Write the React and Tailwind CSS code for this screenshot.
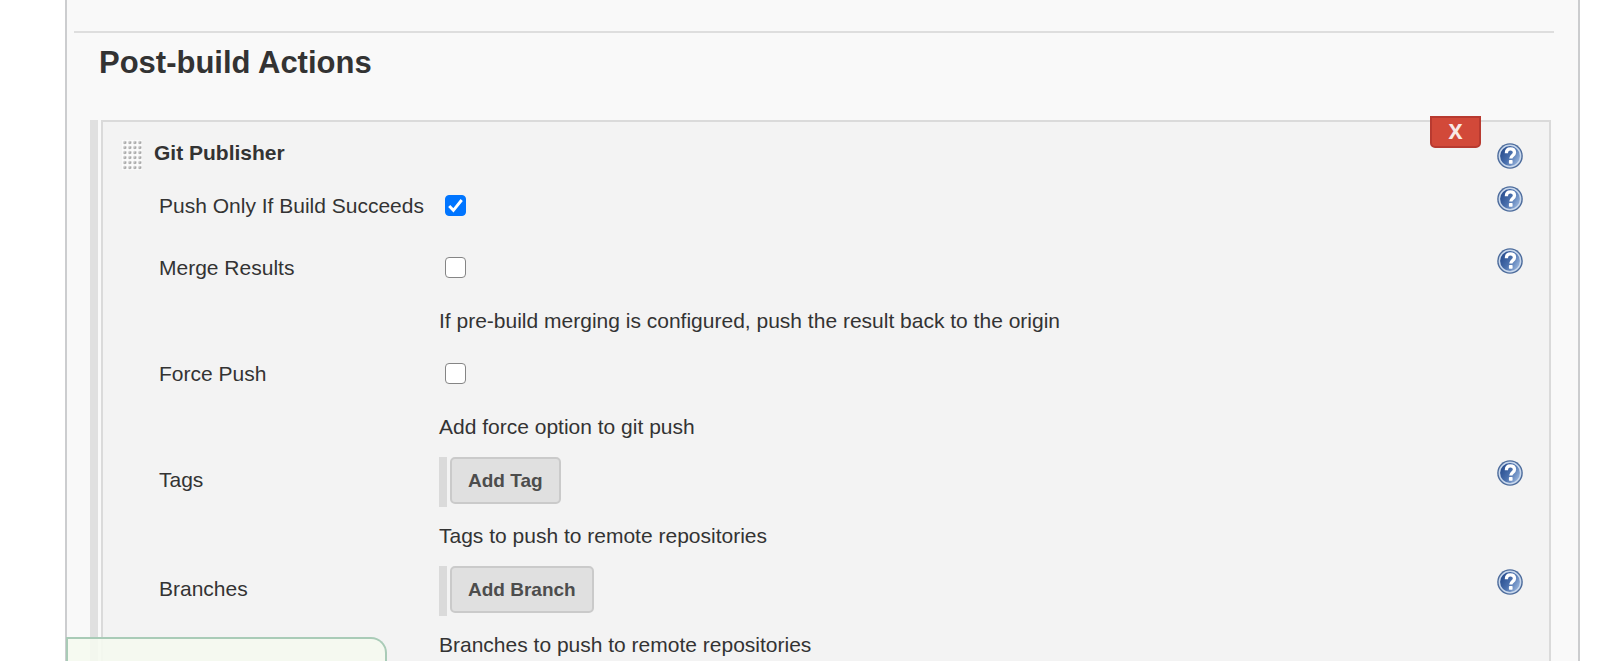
import React from "react";

function HelpIcon() {
  return (
    <svg viewBox="0 0 26 26" className="block size-[26px]" aria-hidden="true">
      <defs>
        <linearGradient id="help-fill" x1="0" y1="0.2" x2="1" y2="0.8">
          <stop offset="0" stopColor="#254a8c" />
          <stop offset="0.5" stopColor="#4a70ad" />
          <stop offset="1" stopColor="#9db9e0" />
        </linearGradient>
      </defs>
      <circle cx="13" cy="13" r="12.8" fill="#4d6c9c" />
      <circle cx="13" cy="13" r="11.4" fill="#c9d8ec" />
      <circle cx="13" cy="13" r="9.9" fill="url(#help-fill)" />
      <path
        d="M9.400 10.200c0-3 1.600-4.300 4-4.300 2.500 0 4.100 1.300 4.100 3.500 0 3-3.700 3.100-3.700 6.200"
        fill="none"
        stroke="#fff"
        strokeWidth="3.3"
      />
      <rect x="11.900" y="17.100" width="3.700" height="3.600" rx="0.700" fill="#fff" />
    </svg>
  );
}

function HelpButton({ topic }) {
  return (
    <button type="button" aria-label={`Help for ${topic}`} className="size-[26px] shrink-0 rounded-full">
      <HelpIcon />
    </button>
  );
}

function Grip() {
  const rows = [0, 1, 2, 3, 4, 5];
  const cols = [0, 1, 2, 3];
  return (
    <svg viewBox="0 0 20 30" className="block h-[30px] w-5 shrink-0" aria-hidden="true">
      <rect width="20" height="30" fill="#fafafa" />
      {rows.map((r) =>
        cols.map((c) => (
          <g key={`${r}-${c}`}>
            <circle cx={c * 5 + 2.8} cy={r * 5 + 2.5} r="1.7" fill="#cfcfcf" />
            <path d={`M${c * 5 + 1.4} ${r * 5 + 3.8}l2.800-2.800v2.800z`} fill="#a8a8a8" />
          </g>
        ))
      )}
    </svg>
  );
}

function Entry({ label, htmlFor, help, description, children }) {
  const Label = htmlFor ? "label" : "span";
  return (
    <div className="grid grid-cols-[280px_1fr_26px]">
      <Label htmlFor={htmlFor} className="pt-2">
        {label}
      </Label>
      <div>
        {children}
        {description && <p>{description}</p>}
      </div>
      {help && <HelpButton topic={label} />}
    </div>
  );
}

function CheckControl({ id, checked = false }) {
  return (
    <div className="grid h-[61px] content-start justify-start pt-[9px] pl-1.5">
      <input
        id={id}
        type="checkbox"
        defaultChecked={checked}
        className="peer col-start-1 row-start-1 size-[21px] appearance-none rounded border border-[#858585] bg-white checked:border-[#0075ff] checked:bg-[#0075ff]"
      />
      <svg
        viewBox="0 0 21 21"
        className="pointer-events-none invisible col-start-1 row-start-1 size-[21px] peer-checked:visible"
        aria-hidden="true"
      >
        <path d="M4.200 10.900l4.200 4.400 8.300-10.300" fill="none" stroke="#fff" strokeWidth="2.9" />
      </svg>
    </div>
  );
}

function AddControl({ children }) {
  return (
    <div className="flex h-16 items-start">
      <div className="-mt-[3px] mr-[3px] h-[50px] w-2 bg-[#dadada]" />
      <button
        type="button"
        className="-mt-[3px] h-[47px] rounded-[5px] border-2 border-[#cacaca] bg-[#e0e0e0] px-4 text-[19px] font-bold text-[#4d4d4d]"
      >
        {children}
      </button>
    </div>
  );
}

export default function App() {
  return (
    <div className="flex min-h-screen bg-white pr-5 pl-[65px] font-['Liberation_Sans',Arial,sans-serif] text-[21px] leading-6 text-[#333]">
      <main className="flex min-w-0 flex-1 flex-col border-x-2 border-[#cccdcf] bg-[#f9f9f9] pt-[31px]">
        <hr className="mr-6 ml-[7px] border-t-2 border-[#dedede]" />
        <h1 className="mt-3 ml-8 text-[31px] leading-9 font-bold">Post-build Actions</h1>

        <div className="mt-[39px] mr-[27px] ml-[23px] flex flex-1 gap-[3px]">
          <div className="w-2 shrink-0 bg-[#e0e0e0]" />
          <section className="relative min-w-0 flex-1 border-x-2 border-t-2 border-[#dadada] bg-[#f3f3f3] pr-[26px] pl-[19px]">
            <button
              type="button"
              aria-label="Delete Git Publisher"
              className="absolute -top-1.5 right-[68px] flex h-8 w-[51px] items-center justify-center rounded-b-[5px] border-2 border-[#b83a30] bg-[#d24939] pb-0.5 font-['Noto_Sans',sans-serif] text-[21px] font-bold text-[#f8e9e6]"
            >
              X
            </button>

            <header className="flex items-start pt-[18px]">
              <Grip />
              <h2 className="mt-px ml-3 flex-1 font-bold">Git Publisher</h2>
              <div className="mt-[3px]">
                <HelpButton topic="Git Publisher" />
              </div>
            </header>

            <div className="mt-3 flex flex-col gap-[21px] pl-[37px]">
              <div className="-mb-5">
                <Entry label="Push Only If Build Succeeds" htmlFor="push-only" help>
                  <CheckControl id="push-only" checked />
                </Entry>
              </div>
              <Entry
                label="Merge Results"
                htmlFor="merge-results"
                help
                description="If pre-build merging is configured, push the result back to the origin"
              >
                <CheckControl id="merge-results" />
              </Entry>
              <Entry label="Force Push" htmlFor="force-push" description="Add force option to git push">
                <CheckControl id="force-push" />
              </Entry>
              <Entry label="Tags" help description="Tags to push to remote repositories">
                <AddControl>Add Tag</AddControl>
              </Entry>
              <Entry label="Branches" help description="Branches to push to remote repositories">
                <AddControl>Add Branch</AddControl>
              </Entry>
            </div>
          </section>
        </div>
      </main>

      <div className="fixed bottom-0 left-[66px] h-6 w-[321px] rounded-tr-2xl border-2 border-b-0 border-[#a9cbb7] bg-[#f5f9f0]/90" />
    </div>
  );
}
